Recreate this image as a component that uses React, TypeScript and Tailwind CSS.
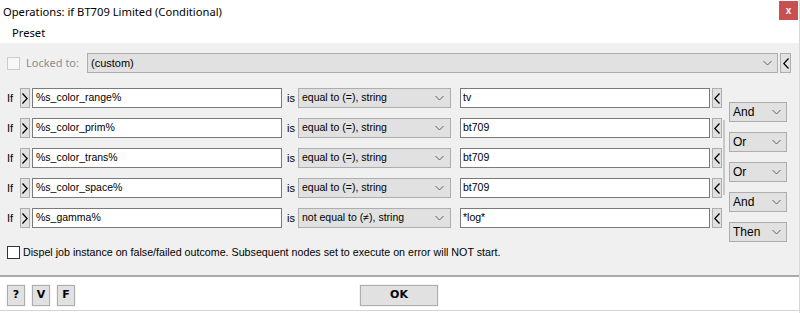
import React from "react";

const ui = { fontFamily: '"Noto Sans", "Open Sans", sans-serif' };
const ms = { fontFamily: '"Liberation Sans", Arial, sans-serif' };

function Chevron() {
  return (
    <svg width="9" height="6" viewBox="0 0 9 6" className="shrink-0">
      <path d="M0.5 1 L4.5 5 L8.5 1" fill="none" stroke="#606060" strokeWidth="1" />
    </svg>
  );
}

function LeftArrowBtn({ w = 10 }: { w?: number }) {
  return (
    <div
      className="h-[20px] bg-[#e1e1e1] border border-[#adadad] flex items-center justify-center shrink-0"
      style={{ width: w }}
    >
      <svg width="6" height="11" viewBox="0 0 6 11">
        <path d="M5.5 0.5 L0.8 5.5 L5.5 10.5" fill="none" stroke="#000" strokeWidth="1.3" />
      </svg>
    </div>
  );
}

function RightArrowBtn() {
  return (
    <div className="w-[10px] h-[20px] bg-[#e1e1e1] border border-[#adadad] flex items-center justify-center shrink-0">
      <svg width="6" height="11" viewBox="0 0 6 11">
        <path d="M0.5 0.5 L5.2 5.5 L0.5 10.5" fill="none" stroke="#000" strokeWidth="1.3" />
      </svg>
    </div>
  );
}

function Row({ name, op, val }: { name: string; op: string; val: string }) {
  return (
    <div className="flex items-center h-[20px] text-[10.5px] text-black" style={ms}>
      <span className="w-[13px] text-[11px]">If</span>
      <RightArrowBtn />
      <div className="ml-[2px] w-[250px] h-[20px] border border-[#7a7a7a] bg-white pl-[3px] flex items-center">
        {name}
      </div>
      <span className="w-[16px] pl-[5px] text-[11px]">is</span>
      <div className="w-[153px] h-[20px] bg-[#e1e1e1] border border-[#adadad] flex items-center justify-between pl-[3px] pr-[6px]">
        <span>{op}</span>
        <Chevron />
      </div>
      <div className="ml-[9px] w-[250px] h-[20px] border border-[#7a7a7a] bg-white pl-[2px] flex items-center">
        {val}
      </div>
      <div className="ml-[2px]">
        <LeftArrowBtn />
      </div>
    </div>
  );
}

function Combo({ label }: { label: string }) {
  return (
    <div
      className="w-[58px] h-[20px] bg-[#e1e1e1] border border-[#adadad] flex items-center justify-between pl-[3px] pr-[5px] text-[12px] text-black"
      style={ms}
    >
      <span>{label}</span>
      <Chevron />
    </div>
  );
}

function FootBtn({ label, w }: { label: string; w: number }) {
  return (
    <div
      className="h-[21px] bg-[#e1e1e1] border border-[#adadad] outline outline-1 outline-[#f4f4f4] flex items-center justify-center text-[11px] font-bold text-black"
      style={{ width: w, fontFamily: '"DejaVu Sans", sans-serif' }}
    >
      {label}
    </div>
  );
}

export default function App() {
  const rows = [
    { name: "%s_color_range%", op: "equal to (=), string", val: "tv" },
    { name: "%s_color_prim%", op: "equal to (=), string", val: "bt709" },
    { name: "%s_color_trans%", op: "equal to (=), string", val: "bt709" },
    { name: "%s_color_space%", op: "equal to (=), string", val: "bt709" },
    { name: "%s_gamma%", op: "not equal to (\u2260), string", val: "*log*" },
  ];
  const combos = ["And", "Or", "Or", "And", "Then"];
  return (
    <div className="w-[800px] h-[313px] bg-white overflow-hidden border-r border-[#d8d8d8] flex flex-col">
      {/* Title bar */}
      <div className="h-[24px] flex items-start justify-between">
        <span className="pl-[3px] pt-[4px] text-[11.2px] leading-[16px] text-black" style={ui}>
          Operations: if BT709 Limited (Conditional)
        </span>
        <div className="mt-[1px] mr-[1px] w-[19px] h-[19px] bg-[#c75050] flex items-center justify-center text-white text-[10px] font-bold leading-none" style={ms}>
          x
        </div>
      </div>
      {/* Menu bar */}
      <div className="h-[19px] flex items-center">
        <span className="pl-[12px] text-[11.2px] text-black" style={ui}>
          Preset
        </span>
      </div>
      {/* Main gray area */}
      <div className="bg-[#f0f0f0] h-[234px] border-b-2 border-[#a9a9a9] pt-[10px] px-[7px] flex flex-col">
        {/* Locked row */}
        <div className="flex items-center h-[20px]">
          <div className="w-[13px] h-[13px] border border-[#cccccc] bg-[#f7f7f7]" />
          <span className="ml-[6px] w-[61px] text-[11px] text-[#8d8d8d]" style={ui}>
            Locked to:
          </span>
          <div className="w-[691px] h-[20px] bg-[#e1e1e1] border border-[#adadad] flex items-center justify-between pl-[3px] pr-[5px] text-[11px] text-black" style={ms}>
            <span>(custom)</span>
            <Chevron />
          </div>
          <div className="ml-[2px]">
            <LeftArrowBtn w={11} />
          </div>
        </div>
        {/* Conditions */}
        <div className="mt-[15px] flex items-start">
          <div className="flex flex-col gap-[10px]">
            {rows.map((r, i) => (
              <Row key={i} {...r} />
            ))}
          </div>
          <div className="ml-[1px] mt-[32px] w-[2px] h-[75px] bg-[#c8c8c8]" />
          <div className="ml-[4px] pt-[14px] flex flex-col gap-[10px]">
            {combos.map((c, i) => (
              <Combo key={i} label={c} />
            ))}
          </div>
        </div>
        {/* Dispel checkbox */}
        <div className="mt-[4px] flex items-center h-[13px]">
          <div className="w-[13px] h-[13px] border border-[#333333] bg-white" />
          <span className="ml-[3px] text-[10.7px] text-black" style={ms}>
            Dispel job instance on false/failed outcome. Subsequent nodes set to execute on error will NOT start.
          </span>
        </div>
      </div>
      {/* Footer */}
      <div className="h-[34px] border-b border-[#d4d4d4] pt-[8px] px-[7px] flex items-start">
        <div className="flex gap-[7px]">
          <FootBtn label="?" w={18} />
          <FootBtn label="V" w={18} />
          <FootBtn label="F" w={18} />
        </div>
        <div className="ml-[285px]">
          <FootBtn label="OK" w={78} />
        </div>
      </div>
    </div>
  );
}
